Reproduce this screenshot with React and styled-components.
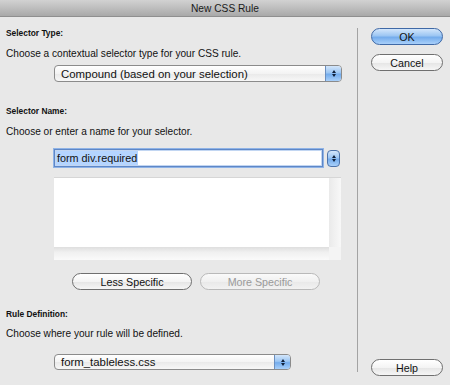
import React from "react";
import styled, { createGlobalStyle, css } from "styled-components";

const GlobalStyle = createGlobalStyle`
  body {
    margin: 0;
    background: #e8e8e8;
    font-family: "Liberation Sans", Arial, sans-serif;
  }
`;

const Window = styled.div`
  width: 450px;
  height: 385px;
  background: #e8e8e8;
  display: flex;
  flex-direction: column;
  overflow: hidden;
  color: #111;
`;

const TitleBar = styled.div`
  height: 16px;
  flex: none;
  background: linear-gradient(#d2d2d2, #a9a9a9);
  border-bottom: 1px solid #8f8f8f;
  display: flex;
  align-items: center;
  justify-content: center;
  font-size: 10.2px;
  color: #1a1a1a;
`;

const Body = styled.div`
  flex: 1;
  display: flex;
`;

const Main = styled.div`
  width: 351px;
  padding-left: 6px;
  display: flex;
  flex-direction: column;
`;

const Divider = styled.div`
  width: 1px;
  background: #a3a3a3;
  margin: 11px 0 13px;
`;

const Side = styled.div`
  flex: 1;
  padding-left: 13px;
  display: flex;
  flex-direction: column;
`;

const SectionLabel = styled.div`
  font-weight: bold;
  font-size: 8.4px;
  line-height: 12px;
  margin-top: ${(p) => p.$gap}px;
`;

const Hint = styled.div`
  font-size: 10.1px;
  line-height: 14px;
  margin-top: ${(p) => p.$gap}px;
`;

const PopupBox = styled.div`
  margin-top: ${(p) => p.$gap}px;
  margin-left: 48px;
  width: ${(p) => p.$width}px;
  height: ${(p) => p.$height}px;
  box-sizing: border-box;
  border: 1px solid #8b8b8b;
  border-radius: 4px;
  background: linear-gradient(#ffffff, #f3f3f3 50%, #e9e9e9 51%, #f7f7f7);
  display: flex;
  overflow: hidden;
`;

const PopupText = styled.div`
  flex: 1;
  padding-left: 6px;
  font-size: 11.4px;
  display: flex;
  align-items: center;
`;

const aquaBlue = css`
  background: linear-gradient(
    #d3e6fb,
    #9cc6f3 45%,
    #74acec 55%,
    #a9d0fa
  );
`;

const PopupArrows = styled.div`
  width: 15px;
  border-left: 1px solid #6b8fbf;
  ${aquaBlue};
  display: flex;
  flex-direction: column;
  align-items: center;
  justify-content: center;
  gap: 1px;
`;

const Arrow = styled.div`
  width: 0;
  height: 0;
  border-left: 2.5px solid transparent;
  border-right: 2.5px solid transparent;
  ${(p) =>
    p.$down
      ? "border-top: 3px solid #10203a;"
      : "border-bottom: 3px solid #10203a;"}
`;

const InputRow = styled.div`
  margin-top: 10px;
  margin-left: 48px;
  display: flex;
  align-items: center;
  gap: 4px;
`;

const TextInput = styled.div`
  width: 269px;
  height: 18px;
  box-sizing: border-box;
  border: 1px solid #5e87c7;
  box-shadow: 0 0 0 1px #8fb3e6, inset 0 0 0 1px #c2d6f2;
  background: #fff;
  display: flex;
  align-items: center;
  padding-left: 1px;
  font-size: 10.8px;
`;

const Selected = styled.span`
  background: #b5d5ff;
  padding: 0 1px;
  line-height: 14px;
`;

const Stepper = styled.div`
  width: 13px;
  height: 17px;
  box-sizing: border-box;
  border: 1px solid #4d73aa;
  border-radius: 4px;
  ${aquaBlue};
  display: flex;
  flex-direction: column;
  align-items: center;
  justify-content: center;
  gap: 1px;
`;

const ListBox = styled.div`
  margin-top: 10px;
  margin-left: 48px;
  width: 287px;
  height: 83px;
  display: grid;
  grid-template-columns: 1fr 12px;
  grid-template-rows: 1fr 13px;
  background: #f4f4f4;
  border-top: 1px solid #d6d6d6;
  box-sizing: border-box;
`;

const ListContent = styled.div`
  background: #fff;
  box-shadow: 1px 1px 0 #9f9f9f, 2px 2px 1px #cfcfcf;
`;

const VTrack = styled.div`
  background: linear-gradient(90deg, #eaeaea, #f8f8f8);
`;

const HTrack = styled.div`
  background: linear-gradient(#dedede, #f0f0f0 40%, #fafafa);
`;

const Corner = styled.div`
  background: #f4f4f4;
`;

const ButtonRow = styled.div`
  margin-top: 13px;
  margin-left: 66px;
  display: flex;
  gap: 8px;
`;

const Button = styled.div`
  width: ${(p) => p.$width || 72}px;
  height: 17px;
  box-sizing: border-box;
  border: 1px solid #6f6f6f;
  border-radius: 9px;
  background: linear-gradient(#ffffff, #f4f4f4 50%, #e6e6e6 55%, #f6f6f6);
  display: flex;
  align-items: center;
  justify-content: center;
  font-size: 10.7px;
  color: #111;
  margin-top: ${(p) => p.$gap || 0}px;

  ${(p) =>
    p.$default &&
    css`
      border-color: #3f69a6;
      ${aquaBlue};
    `}

  ${(p) =>
    p.$disabled &&
    css`
      border-color: #b9b9b9;
      color: #9a9a9a;
      background: linear-gradient(#fafafa, #f0f0f0 50%, #e9e9e9 55%, #f2f2f2);
    `}
`;

const HelpButton = styled(Button)`
  margin-top: auto;
  margin-bottom: 9px;
`;

export default function App() {
  return (
    <>
      <GlobalStyle />
      <Window>
        <TitleBar>New CSS Rule</TitleBar>
        <Body>
          <Main>
            <SectionLabel $gap={10}>Selector Type:</SectionLabel>
            <Hint $gap={8}>
              Choose a contextual selector type for your CSS rule.
            </Hint>
            <PopupBox $gap={4} $width={288} $height={17}>
              <PopupText>Compound (based on your selection)</PopupText>
              <PopupArrows>
                <Arrow />
                <Arrow $down />
              </PopupArrows>
            </PopupBox>

            <SectionLabel $gap={23}>Selector Name:</SectionLabel>
            <Hint $gap={8}>Choose or enter a name for your selector.</Hint>
            <InputRow>
              <TextInput>
                <Selected>form div.required</Selected>
              </TextInput>
              <Stepper>
                <Arrow />
                <Arrow $down />
              </Stepper>
            </InputRow>
            <ListBox>
              <ListContent />
              <VTrack />
              <HTrack />
              <Corner />
            </ListBox>
            <ButtonRow>
              <Button $width={120}>Less Specific</Button>
              <Button $width={120} $disabled>
                More Specific
              </Button>
            </ButtonRow>

            <SectionLabel $gap={18}>Rule Definition:</SectionLabel>
            <Hint $gap={7}>Choose where your rule will be defined.</Hint>
            <PopupBox $gap={13} $width={237} $height={16}>
              <PopupText>form_tableless.css</PopupText>
              <PopupArrows>
                <Arrow />
                <Arrow $down />
              </PopupArrows>
            </PopupBox>
          </Main>
          <Divider />
          <Side>
            <Button $default $gap={11}>
              OK
            </Button>
            <Button $gap={9}>Cancel</Button>
            <HelpButton>Help</HelpButton>
          </Side>
        </Body>
      </Window>
    </>
  );
}
